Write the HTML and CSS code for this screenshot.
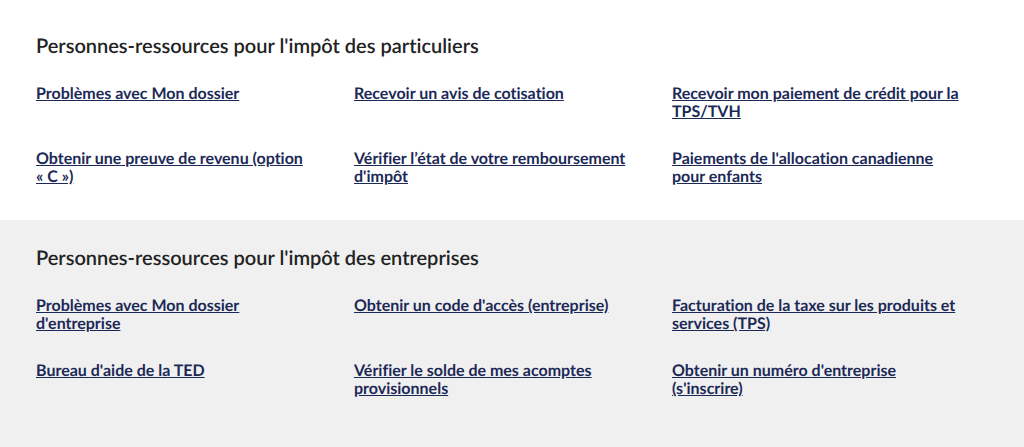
FILE: index.html
```html
<!DOCTYPE html>
<html lang="fr">
<head>
<meta charset="utf-8">
<title>Personnes-ressources</title>
<link rel="stylesheet" href="styles.css">
</head>
<body>
<main>
<section class="contacts">
<h2 class="contacts-title">Personnes-ressources pour l'impôt des particuliers</h2>
<ul class="contacts-list">
<li><a href="#">Problèmes avec Mon dossier</a></li>
<li><a href="#">Recevoir un avis de cotisation</a></li>
<li><a href="#">Recevoir mon paiement de crédit pour la TPS/TVH</a></li>
<li><a href="#">Obtenir une preuve de revenu (option «&nbsp;C&nbsp;»)</a></li>
<li><a href="#">Vérifier l’état de votre remboursement d'impôt</a></li>
<li><a href="#">Paiements de l'allocation canadienne pour enfants</a></li>
</ul>
</section>
<section class="contacts contacts-shaded">
<h2 class="contacts-title">Personnes-ressources pour l'impôt des entreprises</h2>
<ul class="contacts-list">
<li><a href="#">Problèmes avec Mon dossier d'entreprise</a></li>
<li><a href="#">Obtenir un code d'accès (entreprise)</a></li>
<li><a href="#">Facturation de la taxe sur les produits et services (TPS)</a></li>
<li><a href="#">Bureau d'aide de la TED</a></li>
<li><a href="#">Vérifier le solde de mes acomptes provisionnels</a></li>
<li><a href="#">Obtenir un numéro d'entreprise (s'inscrire)</a></li>
</ul>
</section>
</main>
</body>
</html>
```
FILE: styles.css
```css
* {
  box-sizing: border-box;
}

body {
  margin: 0;
  background: #f0f0f0;
  font-family: Lato, "Liberation Sans", sans-serif;
  font-variant-ligatures: none;
  text-rendering: geometricPrecision;
  color: #222;
}

.contacts {
  padding: 34px 34px 34px 36px;
  background: #fff;
}

.contacts-shaded {
  padding-top: 26px;
  background: #f0f0f0;
}

.contacts-title {
  margin: 0 0 27px;
  font-size: 20px;
  line-height: 24px;
  font-weight: 600;
}

.contacts-list {
  display: grid;
  grid-template-columns: repeat(3, 1fr);
  gap: 29px 0;
  margin: 0;
  padding: 0;
  list-style: none;
  font-size: 16px;
  line-height: 18px;
  font-weight: 700;
}

.contacts-list li {
  padding-right: 28px;
}

.contacts-list a {
  color: #1c2957;
}
```
